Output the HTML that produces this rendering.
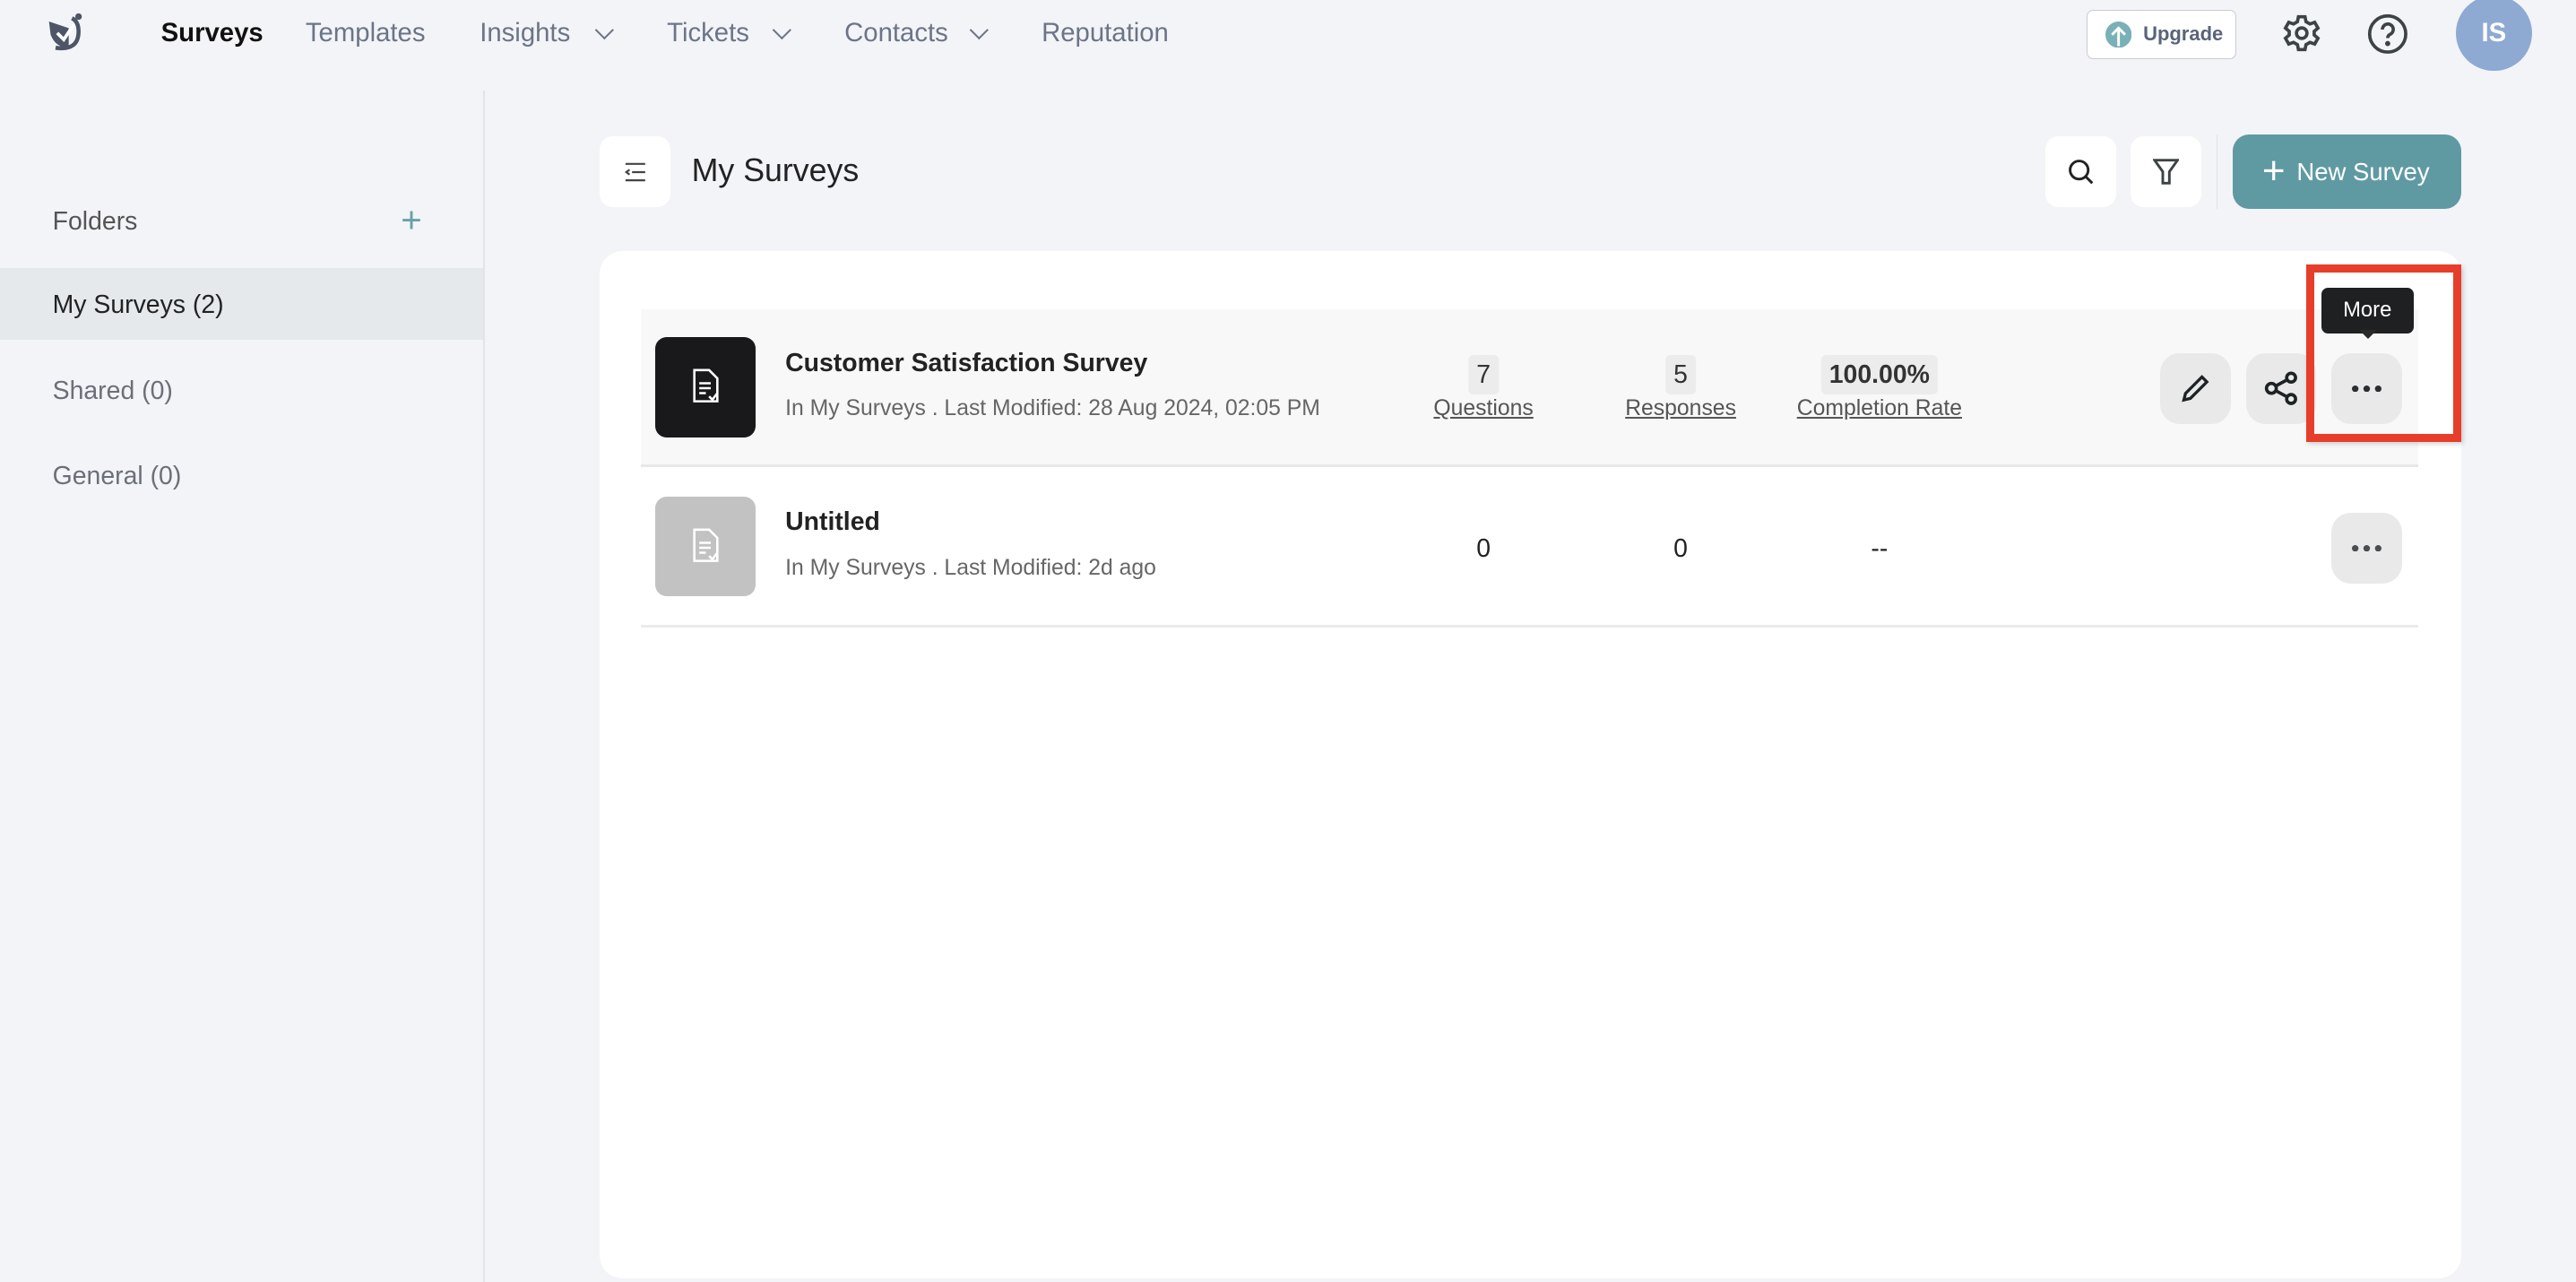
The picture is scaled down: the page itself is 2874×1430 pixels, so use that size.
<!DOCTYPE html>
<html><head><meta charset="utf-8"><style>
*{box-sizing:border-box;margin:0;padding:0}
html,body{width:2874px;height:1430px;overflow:hidden;background:#f3f4f8}
#w{zoom:1.83291;width:1568px;height:780px;position:relative;font-family:"Liberation Sans",sans-serif;color:#222}
.a{position:absolute}
.nav{top:11px;font-size:16px;color:#6b7587;white-space:nowrap}
.chev{top:14px;width:8px;height:8px;border-right:1.5px solid #6b7587;border-bottom:1.5px solid #6b7587;transform:rotate(45deg)}
.side{font-size:15.5px;color:#6b6f78;left:32px}
.btn{background:#e9e9e9;border-radius:12px;width:43px;height:43px;display:flex;align-items:center;justify-content:center}
.wb{background:#fff;border-radius:8px;width:43px;height:43px;display:flex;align-items:center;justify-content:center}
.stat{text-align:center;transform:translateX(-50%)}
.badge{display:inline-block;background:#ececec;border-radius:3px;padding:1px 5px;font-size:15.5px;color:#333;line-height:22px}
.lbl{font-size:13.5px;color:#555;text-decoration:underline;margin-top:1px}
</style></head><body><div id="w">
<svg class="a" style="left:28px;top:7px" width="26" height="28" viewBox="0 0 26 28"><path d="M2 6 L14 10 L14 22 Q6 22 3 14Z" fill="#4d5566"/><path d="M6 22 Q20 24 20 12 Q20 6 16 4" stroke="#4d5566" stroke-width="2.5" fill="none"/><path d="M7 13 L11 17 L17 8" stroke="#fff" stroke-width="2" fill="none"/><circle cx="20" cy="3" r="2" fill="#4d5566"/></svg>
<div class="a nav" style="left:98px;color:#111;font-weight:600">Surveys</div>
<div class="a nav" style="left:186px">Templates</div>
<div class="a nav" style="left:292px">Insights</div><div class="a chev" style="left:364px"></div>
<div class="a nav" style="left:406px">Tickets</div><div class="a chev" style="left:472px"></div>
<div class="a nav" style="left:514px">Contacts</div><div class="a chev" style="left:592px"></div>
<div class="a nav" style="left:634px">Reputation</div>
<div class="a" style="left:1270px;top:6px;width:91px;height:30px;background:#fff;border:1px solid #c9ccd3;border-radius:4px;display:flex;align-items:center;padding-left:11px;font-size:12px;font-weight:700;color:#5a6478"><svg width="16" height="16" viewBox="0 0 16 16" style="margin-right:7px"><circle cx="8" cy="8" r="8" fill="#7ab0b8"/><path d="M8 15V4M4 8l4-4 4 4" stroke="#fff" stroke-width="1.6" fill="none"/></svg>Upgrade</div>
<svg class="a" style="left:1389px;top:8px" width="24" height="24" viewBox="0 0 24 24" fill="none" stroke="#3d4345" stroke-width="2"><circle cx="12" cy="12" r="3.2"/><path d="M10 2h4l.6 3 2.4 1.4 2.9-1 2 3.5-2.3 2v2.2l2.3 2-2 3.5-2.9-1-2.4 1.4-.6 3h-4l-.6-3-2.4-1.4-2.9 1-2-3.5 2.3-2v-2.2l-2.3-2 2-3.5 2.9 1L9.4 5z"/></svg>
<svg class="a" style="left:1441px;top:8px" width="25" height="25" viewBox="0 0 25 25" fill="none" stroke="#3d4345" stroke-width="2"><circle cx="12.5" cy="12.5" r="11"/><path d="M9.3 9.8a3.3 3.3 0 1 1 4.5 3c-1 .5-1.3 1.1-1.3 2.2"/><circle cx="12.5" cy="18.3" r=".6" fill="#3d4345"/></svg>
<div class="a" style="left:1495px;top:-3px;width:46px;height:46px;border-radius:50%;background:#8eaad3;color:#fff;font-size:16px;font-weight:600;display:flex;align-items:center;justify-content:center">IS</div>
<div class="a" style="left:294px;top:55px;width:1px;height:725px;background:#e2e4e8"></div>
<div class="a side" style="top:126px;font-weight:500;color:#555">Folders</div>
<div class="a" style="left:244px;top:124px;font-size:22px;color:#6aa0a8;line-height:20px">+</div>
<div class="a" style="left:0;top:163px;width:294px;height:44px;background:#e5e9ec"></div>
<div class="a side" style="top:177px;color:#222">My Surveys (2)</div>
<div class="a side" style="top:229px">Shared (0)</div>
<div class="a side" style="top:281px">General (0)</div>
<div class="a wb" style="left:365px;top:83px"><svg width="14" height="12" viewBox="0 0 14 12" stroke="#444" stroke-width="1.2"><path d="M1 1h12M5 6h8M1 11h12M3.5 4.5 1.5 6l2 1.5" fill="none"/></svg></div>
<div class="a" style="left:421px;top:93px;font-size:19.5px;font-weight:500;color:#222">My Surveys</div>
<div class="a wb" style="left:1245px;top:83px"><svg width="18" height="18" viewBox="0 0 18 18" fill="none" stroke="#222" stroke-width="1.6"><circle cx="8" cy="8" r="5.5"/><path d="M12 12l4 4"/></svg></div>
<div class="a wb" style="left:1297px;top:83px"><svg width="16" height="18" viewBox="0 0 16 18" fill="none" stroke="#3d4345" stroke-width="1.6"><path d="M1 2h14L10 9v7H6V9z"/></svg></div>
<div class="a" style="left:1349px;top:82px;width:1px;height:45px;background:#e2e4e8"></div>
<div class="a" style="left:1359px;top:82px;width:139px;height:45px;background:#5f9aa3;border-radius:10px;color:#fff;font-size:15px;font-weight:500;display:flex;align-items:center;padding-left:18px"><span style="font-size:24px;font-weight:300;margin-right:7px;line-height:20px">+</span>New Survey</div>
<div class="a" style="left:365px;top:153px;width:1133px;height:625px;background:#fff;border-radius:14px"></div>
<div class="a" style="left:390px;top:188px;width:1082px;height:96px;background:#f8f8f8;border-bottom:2px solid #e8e8e8"></div>
<div class="a" style="left:390px;top:285px;width:1082px;height:97px;border-bottom:2px solid #ebebeb"></div>
<div class="a" style="left:399px;top:205px;width:61px;height:61px;border-radius:7px;background:#19191c;display:flex;align-items:center;justify-content:center"><svg width="18" height="22" viewBox="0 0 18 22" fill="none" stroke="#fff" stroke-width="1.4"><path d="M2 1h9l5 5v14H2z"/><path d="M5 9h7M5 12h7M5 15h4M11 17l2 2 3-4"/></svg></div>
<div class="a" style="left:399px;top:302px;width:61px;height:61px;border-radius:7px;background:#c2c2c2;display:flex;align-items:center;justify-content:center"><svg width="18" height="22" viewBox="0 0 18 22" fill="none" stroke="#fff" stroke-width="1.4"><path d="M2 1h9l5 5v14H2z"/><path d="M5 9h7M5 12h7M5 15h4M11 17l2 2 3-4"/></svg></div>
<div class="a" style="left:478px;top:212px;font-size:15.5px;font-weight:600;color:#222">Customer Satisfaction Survey</div>
<div class="a" style="left:478px;top:241px;font-size:13.5px;color:#666">In My Surveys . Last Modified: 28 Aug 2024, 02:05 PM</div>
<div class="a" style="left:478px;top:309px;font-size:15.5px;font-weight:600;color:#222">Untitled</div>
<div class="a" style="left:478px;top:338px;font-size:13.5px;color:#666">In My Surveys . Last Modified: 2d ago</div>
<div class="a stat" style="left:903px;top:216px"><div class="badge">7</div><div class="lbl">Questions</div></div>
<div class="a stat" style="left:1023px;top:216px"><div class="badge">5</div><div class="lbl">Responses</div></div>
<div class="a stat" style="left:1144px;top:216px"><div class="badge" style="font-weight:700">100.00%</div><div class="lbl">Completion Rate</div></div>
<div class="a stat" style="left:903px;top:325px;font-size:15.5px">0</div>
<div class="a stat" style="left:1023px;top:325px;font-size:15.5px">0</div>
<div class="a stat" style="left:1144px;top:325px;font-size:15.5px">--</div>
<div class="a btn" style="left:1315px;top:215px"><svg width="20" height="20" viewBox="0 0 20 20" fill="none" stroke="#1d2325" stroke-width="1.8"><path d="M3 17l1-4L14 3l3 3L7 16z"/></svg></div>
<div class="a btn" style="left:1367px;top:215px"><svg width="22" height="22" viewBox="0 0 22 22" fill="none" stroke="#1d2325" stroke-width="2"><circle cx="5" cy="11" r="3"/><circle cx="17" cy="4.5" r="2.7"/><circle cx="17" cy="17.5" r="2.7"/><path d="M7.6 9.6l7-3.8M7.6 12.4l7 3.8"/></svg></div>
<div class="a btn" style="left:1419px;top:215px"><svg width="18" height="4"><circle cx="2" cy="2" r="2" fill="#2a2e30"/><circle cx="9" cy="2" r="2" fill="#2a2e30"/><circle cx="16" cy="2" r="2" fill="#2a2e30"/></svg></div>
<div class="a btn" style="left:1419px;top:312px"><svg width="18" height="4"><circle cx="2" cy="2" r="2" fill="#4a4e50"/><circle cx="9" cy="2" r="2" fill="#4a4e50"/><circle cx="16" cy="2" r="2" fill="#4a4e50"/></svg></div>
<div class="a" style="left:1413px;top:175px;width:56px;height:28px;background:#1f2022;border-radius:4px;color:#fff;font-size:13px;display:flex;align-items:center;justify-content:center">More</div>
<div class="a" style="left:1436px;top:201px;width:0;height:0;border-left:6px solid transparent;border-right:6px solid transparent;border-top:6px solid #2a2a2a"></div>
<div class="a" style="left:1404px;top:161px;width:94px;height:108px;border:5px solid #e63e2a;box-shadow:1px 1px 3px rgba(0,0,0,.2)"></div>
</div></body></html>
